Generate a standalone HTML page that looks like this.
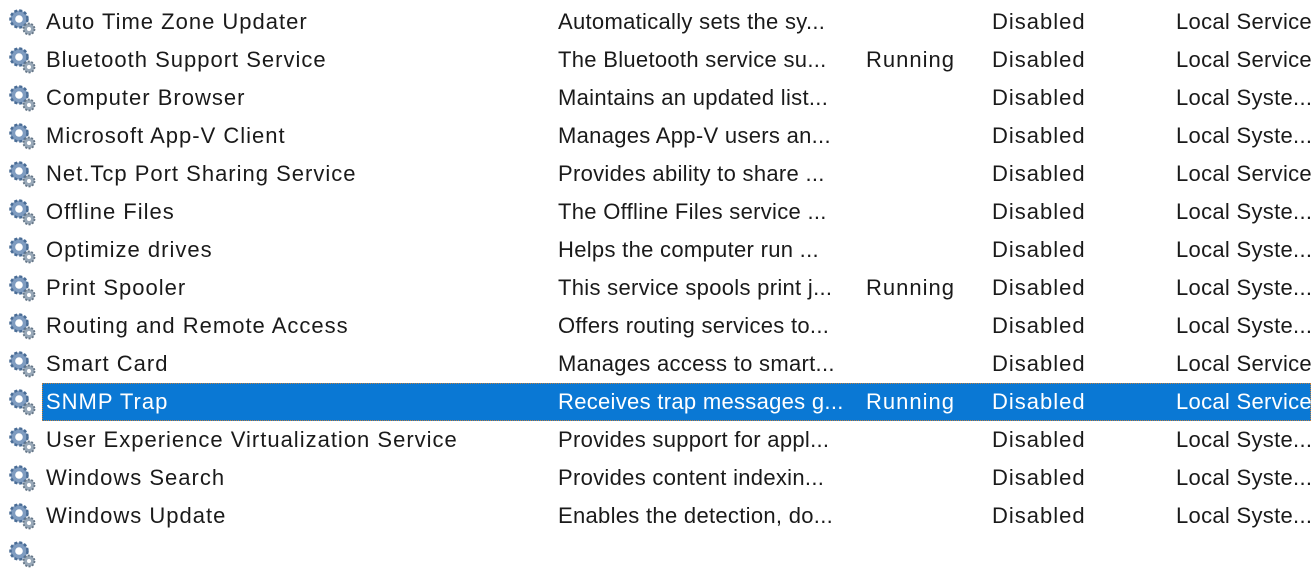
<!DOCTYPE html>
<html><head><meta charset="utf-8"><style>
body{margin:0;width:1316px;height:536px;overflow:hidden;background:#fff;font-family:"Liberation Sans",sans-serif;font-size:22px;letter-spacing:1px;color:#1a1a1a;position:relative}
.r{position:absolute;left:0;width:1316px;height:38px;line-height:38px}
.r span{position:absolute;white-space:nowrap}
.r span.c1,.r span.c4{letter-spacing:0.3px}
.sel .bg{position:absolute;left:42px;top:0;width:1269px;height:38px;background:#0a78d4;outline:1px dotted #c08040;outline-offset:-1px}
.sel span{color:#fff}
.ic{position:absolute;left:8px;top:5px;width:30px;height:30px}
</style></head><body>
<svg width="0" height="0" style="position:absolute"><defs>
<g id="g"><circle cx="11" cy="11" r="8.5" fill="#7f9cc0" stroke="#4a6d96" stroke-width="2.5" stroke-dasharray="3 2"/><circle cx="11" cy="11" r="3.8" fill="#fff"/><circle cx="21" cy="21" r="5.5" fill="#98a8b8" stroke="#667788" stroke-width="1.8" stroke-dasharray="2 1.5"/><circle cx="21" cy="21" r="2" fill="#fff"/></g></defs></svg>
<div id="rows"></div>
<script>
var d=[["Auto Time Zone Updater","Automatically sets the sy...","","Disabled","Local Service"],
["Bluetooth Support Service","The Bluetooth service su...","Running","Disabled","Local Service"],
["Computer Browser","Maintains an updated list...","","Disabled","Local Syste..."],
["Microsoft App-V Client","Manages App-V users an...","","Disabled","Local Syste..."],
["Net.Tcp Port Sharing Service","Provides ability to share ...","","Disabled","Local Service"],
["Offline Files","The Offline Files service ...","","Disabled","Local Syste..."],
["Optimize drives","Helps the computer run ...","","Disabled","Local Syste..."],
["Print Spooler","This service spools print j...","Running","Disabled","Local Syste..."],
["Routing and Remote Access","Offers routing services to...","","Disabled","Local Syste..."],
["Smart Card","Manages access to smart...","","Disabled","Local Service"],
["SNMP Trap","Receives trap messages g...","Running","Disabled","Local Service"],
["User Experience Virtualization Service","Provides support for appl...","","Disabled","Local Syste..."],
["Windows Search","Provides content indexin...","","Disabled","Local Syste..."],
["Windows Update","Enables the detection, do...","","Disabled","Local Syste..."]];
var x=[46,558,866,992,1176],h="";
d.forEach(function(r,i){h+='<div class="r'+(i==10?' sel':'')+'" style="top:'+(3+i*38)+'px">'+(i==10?'<div class="bg"></div>':'')+'<svg class="ic" viewBox="0 0 30 30"><use href="#g"/></svg>';
r.forEach(function(t,j){h+='<span class="c'+j+'" style="left:'+x[j]+'px">'+t+'</span>'});h+='</div>'});
h+='<div class="r" style="top:535px"><svg class="ic" viewBox="0 0 30 30"><use href="#g"/></svg></div>';
document.getElementById("rows").innerHTML=h;
</script>
</body></html>
